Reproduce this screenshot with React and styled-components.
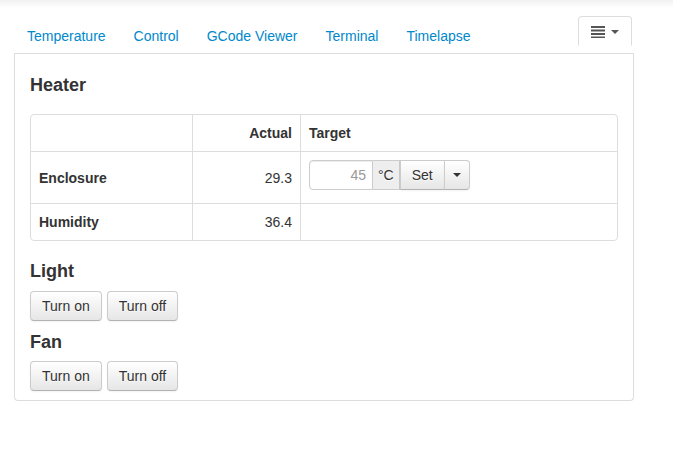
import styled, { createGlobalStyle } from 'styled-components';

const GlobalStyle = createGlobalStyle`
  body {
    margin: 0;
    font-family: "Liberation Sans", Arial, sans-serif;
    font-size: 14px;
    line-height: 20px;
    color: #333;
    background: linear-gradient(#f1f1f1, #ffffff 8px) no-repeat, #fff;
  }
`;

const Wrapper = styled.div`
  width: 620px;
  margin: 16px 0 0 14px;
`;

const Tabs = styled.ul`
  display: flex;
  list-style: none;
  margin: 0;
  padding: 0;
  border-bottom: 1px solid #ddd;
`;

const Tab = styled.li`
  margin-bottom: -1px;
  margin-right: 2px;
  margin-left: ${(p) => (p.$right ? 'auto' : '0')};
`;

const TabLink = styled.a`
  display: flex;
  align-items: center;
  gap: 6px;
  padding: 9px 12px 7px;
  line-height: 20px;
  border: 1px solid ${(p) => (p.$active ? '#ddd' : 'transparent')};
  border-bottom-color: ${(p) => (p.$active ? '#fff' : 'transparent')};
  border-radius: 4px 4px 0 0;
  background: ${(p) => (p.$active ? '#fff' : 'transparent')};
  color: #0088cc;
  text-decoration: none;
  cursor: pointer;
`;

const Caret = styled.span`
  display: inline-block;
  width: 0;
  height: 0;
  border-top: 4px solid ${(p) => p.$color || '#555'};
  border-left: 4px solid transparent;
  border-right: 4px solid transparent;
`;

const Panel = styled.div`
  border: 1px solid #ddd;
  border-top: none;
  border-radius: 0 0 4px 4px;
  padding: 21px 15px 9px;
`;

const Heading = styled.h4`
  margin: ${(p) => p.$margin};
  font-size: 18px;
  line-height: 20px;
  font-weight: bold;
`;

const Table = styled.table`
  width: 100%;
  border: 1px solid #ddd;
  border-collapse: separate;
  border-spacing: 0;
  border-radius: 4px;
`;

const Cell = styled.td`
  padding: 8px;
  line-height: 20px;
  vertical-align: middle;
  text-align: ${(p) => (p.$num ? 'right' : 'left')};
  font-weight: ${(p) => (p.$bold ? 'bold' : 'normal')};
  border-left: ${(p) => (p.$first ? 'none' : '1px solid #ddd')};
  border-top: ${(p) => (p.$top ? 'none' : '1px solid #ddd')};
  width: ${(p) => p.$width || 'auto'};
`;

const InputGroup = styled.div`
  display: flex;
  margin-bottom: 5px;
`;

const Input = styled.input`
  box-sizing: border-box;
  width: 64px;
  height: 30px;
  padding: 4px 6px;
  font: inherit;
  text-align: right;
  color: #555;
  border: 1px solid #ccc;
  border-radius: 4px 0 0 4px;
  box-shadow: inset 0 1px 1px rgba(0, 0, 0, 0.075);
  outline: none;

  &::placeholder {
    color: #999;
  }
`;

const Addon = styled.span`
  box-sizing: border-box;
  height: 30px;
  padding: 4px 5px;
  background: #eee;
  border: 1px solid #ccc;
  border-left: none;
  text-shadow: 0 1px 0 #fff;
`;

const Button = styled.button`
  box-sizing: border-box;
  height: 30px;
  padding: ${(p) => (p.$caret ? '4px 8px' : '4px 11px')};
  font: inherit;
  color: #333;
  background: linear-gradient(#ffffff, #e6e6e6);
  border: 1px solid #ccc;
  border-bottom-color: #b3b3b3;
  border-radius: ${(p) => p.$radius || '4px'};
  margin-left: ${(p) => p.$ml || '0'};
  text-shadow: 0 1px 1px rgba(255, 255, 255, 0.75);
  box-shadow: inset 0 1px 0 rgba(255, 255, 255, 0.2), 0 1px 2px rgba(0, 0, 0, 0.05);
  display: inline-flex;
  align-items: center;
  cursor: pointer;
`;

const ButtonRow = styled.div`
  display: flex;
  gap: 5px;
  margin-bottom: ${(p) => p.$mb || '0'};
`;

function MenuIcon() {
  return (
    <svg width="14" height="12" viewBox="0 0 14 12">
      {[0, 3.5, 7, 10.5].map((y) => (
        <rect key={y} x="0" y={y} width="14" height="2" fill="#555" />
      ))}
    </svg>
  );
}

const tabs = ['Temperature', 'Control', 'GCode Viewer', 'Terminal', 'Timelapse'];

function Switches({ mb }) {
  return (
    <ButtonRow $mb={mb}>
      <Button>Turn on</Button>
      <Button>Turn off</Button>
    </ButtonRow>
  );
}

export default function App() {
  return (
    <>
      <GlobalStyle />
      <Wrapper>
        <Tabs>
          {tabs.map((t) => (
            <Tab key={t}>
              <TabLink>{t}</TabLink>
            </Tab>
          ))}
          <Tab $right>
            <TabLink $active>
              <MenuIcon />
              <Caret />
            </TabLink>
          </Tab>
        </Tabs>
        <Panel>
          <Heading $margin="0 0 19px">Heater</Heading>
          <Table>
            <tbody>
              <tr>
                <Cell $first $top $width="145px"></Cell>
                <Cell $top $bold $num $width="91px">Actual</Cell>
                <Cell $top $bold>Target</Cell>
              </tr>
              <tr>
                <Cell $first $bold>Enclosure</Cell>
                <Cell $num>29.3</Cell>
                <Cell>
                  <InputGroup>
                    <Input placeholder="45" />
                    <Addon>°C</Addon>
                    <Button $radius="0">Set</Button>
                    <Button $caret $radius="0 4px 4px 0" $ml="-1px">
                      <Caret $color="#333" />
                    </Button>
                  </InputGroup>
                </Cell>
              </tr>
              <tr>
                <Cell $first $bold>Humidity</Cell>
                <Cell $num>36.4</Cell>
                <Cell></Cell>
              </tr>
            </tbody>
          </Table>
          <Heading $margin="20px 0 10px">Light</Heading>
          <Switches mb="11px" />
          <Heading $margin="0 0 9px">Fan</Heading>
          <Switches />
        </Panel>
      </Wrapper>
    </>
  );
}
